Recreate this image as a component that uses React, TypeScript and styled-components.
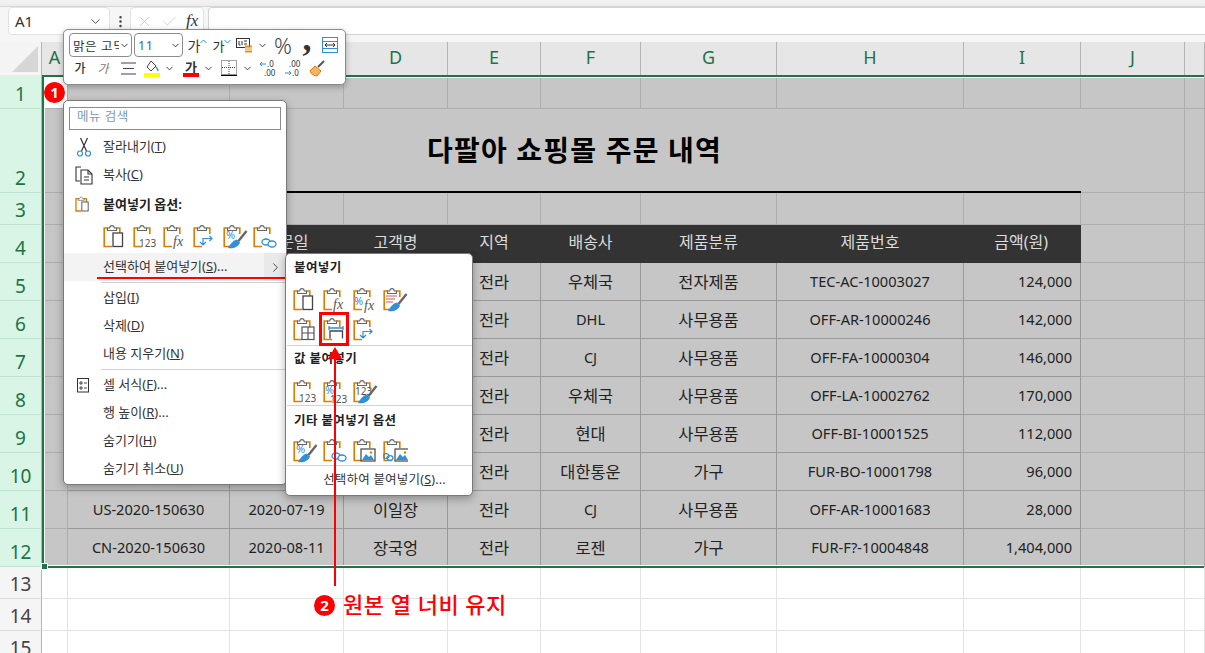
import React from "react";
import styled, { createGlobalStyle } from "styled-components";
import { Check, ChevronDown, ChevronRight, EllipsisVertical, X } from "lucide-react";

const GlobalStyle = createGlobalStyle`
  html, body { margin: 0; padding: 0; background: #fff; }
  body { font-family: "Noto Sans", "Noto Sans CJK KR", sans-serif; }
`;

const COLS = "42px 26px 162px 114px 104px 93px 100px 136px 187px 117px 104px 20px";
const LETTERS = ["A", "B", "C", "D", "E", "F", "G", "H", "I", "J", ""];
const ORANGE = "#e07b00";
const BLUE = "#2f8fd8";
const GRAY = "#555";

type RowData = [string, string, string, string, string, string, string, string];

const ORDERS: RowData[] = [
  ["", "", "", "전라", "우체국", "전자제품", "TEC-AC-10003027", "124,000"],
  ["", "", "", "전라", "DHL", "사무용품", "OFF-AR-10000246", "142,000"],
  ["", "", "", "전라", "CJ", "사무용품", "OFF-FA-10000304", "146,000"],
  ["", "", "", "전라", "우체국", "사무용품", "OFF-LA-10002762", "170,000"],
  ["", "", "", "전라", "현대", "사무용품", "OFF-BI-10001525", "112,000"],
  ["", "", "", "전라", "대한통운", "가구", "FUR-BO-10001798", "96,000"],
  ["US-2020-150630", "2020-07-19", "이일장", "전라", "CJ", "사무용품", "OFF-AR-10001683", "28,000"],
  ["CN-2020-150630", "2020-08-11", "장국엉", "전라", "로젠", "가구", "FUR-F?-10004848", "1,404,000"],
];
const HEADS = ["주문번호", "주문일", "고객명", "지역", "배송사", "제품분류", "제품번호", "금액(원)"];

/* ---------- sheet ---------- */

const Page = styled.div`
  position: relative;
  width: 1205px;
  height: 653px;
  overflow: hidden;
  background: #fff;
  color: #222;
`;

const TopStrip = styled.div`
  height: 7px;
  background: linear-gradient(#f3f3f3, #ebebeb);
`;

const FormulaBar = styled.div`
  display: flex;
  height: 28px;
  padding-bottom: 7px;
  background: #f6f6f6;
  border-top: 1px solid #d6d6d6;
  margin-top: -1px;
`;

const NameBox = styled.div`
  box-sizing: border-box;
  display: flex;
  align-items: center;
  justify-content: space-between;
  width: 102px;
  margin-left: 8px;
  padding: 0 6px 0 6px;
  background: #fff;
  border: 1px solid #e2e2e2;
  border-radius: 4px;
  font-size: 15px;
  color: #333;
`;

const DotsSlot = styled.div`
  display: flex;
  align-items: center;
  justify-content: center;
  width: 20px;
  color: #444;
`;

const FormulaButtons = styled.div`
  box-sizing: border-box;
  display: flex;
  align-items: center;
  gap: 8px;
  width: 74px;
  padding-left: 5px;
  background: #fff;
  border: 1px solid #e2e2e2;
  border-radius: 4px;
  color: #c9c9c9;
`;

const FxMark = styled.span`
  font-family: "Liberation Serif", serif;
  font-style: italic;
  font-size: 17px;
  color: #333;
`;

const FormulaInput = styled.div`
  flex: 1;
  margin-left: 4px;
  background: #fff;
  border: 1px solid #d4d4d4;
  border-right: none;
  border-radius: 4px 0 0 4px;
`;

const ColumnBar = styled.div`
  display: grid;
  grid-template-columns: ${COLS};
  height: 33px;
  background: #e6e6e6;
`;

const Corner = styled.div`
  background: #f4f4f4;
  border-right: 1px solid #b5b5b5;
  position: relative;
  &::after {
    content: "";
    position: absolute;
    right: 3px;
    bottom: 3px;
    width: 26px;
    height: 26px;
    background: #d6d6d6;
    clip-path: polygon(100% 0, 100% 100%, 0 100%);
  }
`;

const ColumnLetter = styled.div`
  display: flex;
  align-items: center;
  justify-content: center;
  padding-bottom: 4px;
  border-right: 1px solid #b5b5b5;
  font-size: 18px;
  color: #217346;
`;

const Body = styled.div`
  position: relative;
`;

const SheetRow = styled.div<{ $h: number }>`
  display: grid;
  grid-template-columns: ${COLS};
  height: ${(p) => p.$h}px;
`;

const RowLabel = styled.div<{ $on: boolean }>`
  display: flex;
  align-items: flex-end;
  justify-content: center;
  padding-bottom: 1px;
  box-sizing: border-box;
  font-size: 19px;
  line-height: 26px;
  background: ${(p) => (p.$on ? "#d8f5e6" : "#f5f5f5")};
  color: ${(p) => (p.$on ? "#217346" : "#444")};
  border-right: 1px solid #b5b5b5;
  border-bottom: 1px solid ${(p) => (p.$on ? "#bfe3d0" : "#dedede")};
`;

type Tone = "sel" | "table" | "head" | "plain";

const LINE: Record<Tone, string> = { sel: "#aeaeae", table: "#999", head: "#333", plain: "#e2e2e2" };

const Cell = styled.div<{ $tone?: Tone; $right?: number; $latin?: boolean }>`
  display: flex;
  align-items: center;
  justify-content: ${(p) => (p.$right ? "flex-end" : "center")};
  box-sizing: border-box;
  padding-right: ${(p) => p.$right ?? 0}px;
  padding-bottom: ${(p) => (p.$tone === "head" ? 5 : 2)}px;
  white-space: nowrap;
  font-size: ${(p) => (p.$latin ? "14.6px" : p.$tone === "head" ? "16px" : "16.4px")};
  color: ${(p) => (p.$tone === "head" ? "#dcdcdc" : "#222")};
  background: ${(p) => (p.$tone === "plain" ? "#fff" : p.$tone === "head" ? "#333" : "#c6c6c6")};
  border-right: 1px solid ${(p) => LINE[p.$tone ?? "sel"]};
  border-bottom: 1px solid ${(p) => LINE[p.$tone ?? "sel"]};
`;

const ActiveCell = styled.div`
  background: #fff;
  border-right: 1px solid #aeaeae;
  border-bottom: 1px solid #aeaeae;
`;

const TitleCell = styled.div`
  grid-column: span 8;
  display: flex;
  align-items: center;
  justify-content: center;
  box-sizing: border-box;
  padding-bottom: 2px;
  background: #c6c6c6;
  border-bottom: 2px solid #000;
  font-size: 28px;
  font-weight: 700;
  letter-spacing: 1.2px;
  color: #000;
`;

const SelectionFrame = styled.div`
  position: absolute;
  left: 42px;
  top: 0;
  box-sizing: border-box;
  width: 1162px;
  height: 493px;
  border: 2px solid #217346;
  border-right: none;
  box-shadow: inset 1px 1px 0 #fff, inset 0 -1px 0 #fff;
  pointer-events: none;
  &::after {
    content: "";
    position: absolute;
    left: -2px;
    bottom: -3px;
    width: 5px;
    height: 5px;
    background: #217346;
    outline: 1px solid #fff;
  }
`;

/* ---------- mini toolbar ---------- */

const MiniToolbar = styled.div`
  position: absolute;
  left: 63px;
  top: 29px;
  box-sizing: border-box;
  width: 283px;
  height: 56px;
  padding: 3px 5px;
  background: #fff;
  border: 1px solid #8c8c8c;
  border-radius: 5px;
  box-shadow: 0 2px 6px rgba(0, 0, 0, 0.28);
`;

const ToolRow = styled.div<{ $h: number }>`
  display: flex;
  align-items: center;
  height: ${(p) => p.$h}px;
  & + & {
    margin-top: 1px;
  }
`;

const ComboBox = styled.div<{ $w: number }>`
  box-sizing: border-box;
  display: flex;
  align-items: center;
  justify-content: space-between;
  flex: none;
  width: ${(p) => p.$w}px;
  height: 24px;
  margin-right: 2px;
  padding: 0 1px 0 3px;
  border: 1px solid #8c8c8c;
  border-radius: 4px;
  font-size: 12.5px;
  letter-spacing: 0.6px;
  color: #333;
  overflow: hidden;
  white-space: nowrap;
`;

const ComboText = styled.span<{ $blue?: boolean }>`
  overflow: hidden;
  color: ${(p) => (p.$blue ? "#1f6fb5" : "#333")};
`;

const ToolSlot = styled.div<{ $w: number; $ml?: number }>`
  position: relative;
  display: flex;
  align-items: center;
  justify-content: center;
  flex: none;
  width: ${(p) => p.$w}px;
  height: 20px;
  margin-left: ${(p) => p.$ml ?? 0}px;
  color: #444;
`;

const TinyChevron = styled(ChevronDown).attrs({ size: 11 })`
  flex: none;
  color: #333;
`;

const HanGlyph = styled.span<{ $weight?: number; $italic?: boolean; $size?: number; $lift?: number }>`
  font-size: ${(p) => p.$size ?? 12}px;
  font-weight: ${(p) => p.$weight ?? 400};
  font-style: ${(p) => (p.$italic ? "italic" : "normal")};
  margin-top: ${(p) => -(p.$lift ?? 0)}px;
  color: ${(p) => (p.$italic ? "#777" : "#333")};
`;

const Percent = styled.span`
  font-size: 22px;
  font-weight: 300;
  color: #444;
`;

const Comma = styled.span`
  font-family: "Liberation Serif", serif;
  font-weight: 700;
  font-size: 36px;
  line-height: 20px;
  margin-top: -14px;
  color: #333;
`;

/* ---------- menus ---------- */

const Menu = styled.div`
  position: absolute;
  box-sizing: border-box;
  background: #fff;
  border: 1px solid #7a7a7a;
  border-radius: 5px;
  box-shadow: 0 3px 9px rgba(0, 0, 0, 0.3);
  font-size: 13px;
  color: #333;
`;

const ContextMenu = styled(Menu)`
  left: 63px;
  top: 100px;
  width: 224px;
  height: 385px;
  padding-top: 6px;
`;

const PasteMenu = styled(Menu)`
  left: 285px;
  top: 253px;
  width: 188px;
  height: 243px;
  padding-top: 4px;
`;

const SearchBox = styled.div`
  box-sizing: border-box;
  height: 23px;
  margin: 0 5px 3px;
  padding-left: 7px;
  border: 1px solid #8a8a8a;
  font-size: 12.5px;
  line-height: 17px;
  color: #7d9cb0;
  letter-spacing: 0.5px;
`;

const MenuItem = styled.div<{ $hover?: boolean; $h?: number; $top?: number }>`
  position: relative;
  display: flex;
  align-items: center;
  height: ${(p) => p.$h ?? 28}px;
  margin-top: ${(p) => p.$top ?? 0}px;
  background: ${(p) => (p.$hover ? "#f3f3f3" : "transparent")};
`;

const ItemIcon = styled.div`
  display: flex;
  align-items: center;
  justify-content: center;
  width: 37px;
  padding-left: 2px;
  box-sizing: border-box;
  flex: none;
`;

const ItemLabel = styled.span<{ $bold?: boolean }>`
  margin: -3px 0 0 2px;
  font-weight: ${(p) => (p.$bold ? 700 : 400)};
  color: ${(p) => (p.$bold ? "#222" : "#333")};
  white-space: nowrap;
`;

const IconRow = styled.div<{ $left: number; $h: number; $top?: number }>`
  display: flex;
  align-items: flex-start;
  gap: 5px;
  padding-left: ${(p) => p.$left}px;
  height: ${(p) => p.$h}px;
  margin-top: ${(p) => p.$top ?? 0}px;
`;

const SubmenuArrow = styled.div`
  position: absolute;
  right: 0;
  top: 0;
  bottom: 0;
  width: 22px;
  display: flex;
  align-items: center;
  justify-content: center;
  background: #e9e9e9;
  color: #333;
`;

const RedUnderline = styled.div`
  position: absolute;
  left: 33px;
  right: 0;
  bottom: 2px;
  height: 2px;
  background: #f00;
`;

const MenuRule = styled.div<{ $inset: number; $gap?: number }>`
  height: 1px;
  margin: ${(p) => p.$gap ?? 1}px 0 ${(p) => p.$gap ?? 1}px ${(p) => p.$inset}px;
  background: #d2d2d2;
`;

const GroupTitle = styled.div<{ $top?: number }>`
  height: 19px;
  line-height: 19px;
  margin-top: ${(p) => p.$top ?? 0}px;
  padding-left: 8px;
  font-size: 12.5px;
  font-weight: 700;
  letter-spacing: 0.4px;
  color: #222;
`;

const CenterItem = styled.div`
  height: 28px;
  line-height: 27px;
  text-align: center;
  font-size: 12.5px;
  letter-spacing: 0.2px;
  padding-left: 11px;
`;

const PickedFrame = styled.div`
  box-sizing: border-box;
  flex: none;
  width: 30px;
  height: 34px;
  margin: -5px -1px 0 -4px;
  padding: 2px 0 0 1px;
  border: 3px solid #f00;
`;

/* ---------- annotations ---------- */

const Badge = styled.div<{ $x: number; $y: number }>`
  position: absolute;
  left: ${(p) => p.$x}px;
  top: ${(p) => p.$y}px;
  display: flex;
  align-items: center;
  justify-content: center;
  width: 21px;
  height: 21px;
  border-radius: 50%;
  background: #f00;
  color: #fff;
  font-size: 15px;
  font-weight: 700;
  line-height: 1;
`;

const CalloutText = styled.div`
  position: absolute;
  left: 343px;
  top: 588px;
  font-size: 22px;
  font-weight: 500;
  letter-spacing: 0.5px;
  line-height: 32px;
  color: #f00;
  white-space: nowrap;
`;

const ArrowOverlay = styled.svg`
  position: absolute;
  left: 325px;
  top: 345px;
`;

/* ---------- icons ---------- */

type Overlay =
  | "page" | "values" | "fx" | "pctFx" | "keep" | "grid" | "width" | "swap"
  | "pctValues" | "valuesBrush" | "pctBrush" | "link" | "picture" | "linkPicture";

const Brush = () => (
  <g>
    <path d="M14 15.5c-4 1-6.500 4-9 8.500 5 1 10.500-1 12-5.500z" fill={BLUE} />
    <path d="M15.500 17 23.500 7" stroke="#666" strokeWidth="2.4" fill="none" />
  </g>
);

const LinkMark = () => (
  <g fill="#fff" stroke={BLUE} strokeWidth="1.3">
    <ellipse cx="13" cy="18" rx="4" ry="3" />
    <ellipse cx="19" cy="20" rx="4" ry="3" />
  </g>
);

const Mountains = ({ x = 0 }: { x?: number }) => (
  <g transform={`translate(${x} 0)`}>
    <rect x="8" y="11" width="14" height="12" fill="#fff" stroke="#444" strokeWidth="1.2" />
    <path d="M9 22l4-6 3 3 2-2 3 5z" fill={BLUE} />
    <circle cx="18" cy="14.5" r="1.2" fill={ORANGE} />
  </g>
);

const OVERLAYS: Record<Overlay, React.ReactNode> = {
  page: <rect x="10" y="9" width="9.5" height="13.5" fill="#fff" stroke="#444" strokeWidth="1.3" />,
  values: <text x="6" y="23" fontSize="10" fill={GRAY} fontFamily="Noto Sans">123</text>,
  fx: <text x="10" y="22" fontSize="14" fontStyle="italic" fill={GRAY} fontFamily="Liberation Serif">fx</text>,
  pctFx: (
    <g>
      <text x="1" y="18" fontSize="11" fill={BLUE} fontFamily="Noto Sans">%</text>
      <text x="11" y="23" fontSize="14" fontStyle="italic" fill={GRAY} fontFamily="Liberation Serif">fx</text>
    </g>
  ),
  keep: (
    <g>
      <path d="M3 9h11M3 12h9M3 15h7" stroke="#d9534f" strokeWidth="1" />
      <Brush />
    </g>
  ),
  grid: (
    <g fill="#fff" stroke={GRAY} strokeWidth="1.2">
      <rect x="9" y="10" width="12" height="12.5" />
      <path d="M15 10v12.5M9 16h12" fill="none" />
    </g>
  ),
  width: (
    <g fill="none" strokeWidth="1.3">
      <path d="M6 11h14M6 9v4M20 9v4" stroke={BLUE} />
      <path d="M7 21.5V14h12.5v7.5" stroke="#444" />
    </g>
  ),
  swap: (
    <g fill="none" stroke={BLUE} strokeWidth="1.2">
      <path d="M10 20v-5.500h9M16.500 12l2.500 2.500-2.500 2.500M7 18l3 3 3-3" />
    </g>
  ),
  pctValues: (
    <g>
      <text x="2" y="15" fontSize="11" fill={BLUE} fontFamily="Noto Sans">%</text>
      <text x="7" y="24" fontSize="10" fill={GRAY} fontFamily="Noto Sans">123</text>
    </g>
  ),
  valuesBrush: (
    <g>
      <text x="2" y="16" fontSize="10" fill={GRAY} fontFamily="Noto Sans">123</text>
      <Brush />
    </g>
  ),
  pctBrush: (
    <g>
      <text x="3" y="15" fontSize="11" fill={BLUE} fontFamily="Noto Sans">%</text>
      <Brush />
    </g>
  ),
  link: <LinkMark />,
  picture: <Mountains />,
  linkPicture: (
    <g>
      <ellipse cx="3" cy="18" rx="3" ry="2.4" fill="none" stroke={BLUE} strokeWidth="1.2" />
      <ellipse cx="7" cy="20" rx="3" ry="2.4" fill="none" stroke={BLUE} strokeWidth="1.2" />
      <Mountains x={4} />
    </g>
  ),
};

const ClipSvg = styled.svg`
  flex: none;
`;

const PasteIcon = ({ kind, small }: { kind: Overlay; small?: boolean }) => (
  <ClipSvg width={small ? 17 : 25} height={small ? 18 : 27} viewBox="0 0 25 27">
    <path d="M5 4H1.2v18.5H9M13 4h3.8v6" fill="none" stroke={ORANGE} strokeWidth={small ? 2 : 1.6} />
    <path d="M4.5 6.5V4h2.2C7 .8 11 .8 11.3 4h2.2v2.5z" fill="#fff" stroke="#666" strokeWidth="1.1" />
    {OVERLAYS[kind]}
  </ClipSvg>
);

const Scissors = () => (
  <svg width="16" height="20" viewBox="0 0 16 20" fill="none">
    <path d="M4.5 1l6 13M11.5 1l-6 13" stroke="#333" strokeWidth="1.2" />
    <circle cx="4" cy="16.5" r="2.5" stroke={BLUE} strokeWidth="1.2" />
    <circle cx="12" cy="16.5" r="2.5" stroke={BLUE} strokeWidth="1.2" />
  </svg>
);

const CopyPages = () => (
  <svg width="20" height="20" viewBox="0 0 20 20" fill="none" stroke="#333" strokeWidth="1.1">
    <path d="M7 2H2v14h4" />
    <path d="M7 5h7l4 4v10H7z" fill="#fff" />
    <path d="M14 5v4h4M10 12h5M10 15h5" />
  </svg>
);

const CellFormat = () => (
  <svg width="13" height="15" viewBox="0 0 13 15" fill="none" stroke="#333">
    <rect x="0.5" y="0.5" width="11" height="13.5" />
    <path d="M3 4h2v2H3zM3 9h2v2H3zM7 5h3M7 10h3" strokeWidth="0.9" />
  </svg>
);

const CaretSvg = styled.svg`
  margin-top: -8px;
`;

const GrowCaret = ({ down }: { down?: boolean }) => (
  <CaretSvg width="7" height="5" viewBox="0 0 7 5" fill="none" stroke={BLUE}>
    <path d={down ? "M.5 1l3 3 3-3" : "M.5 4l3-3 3 3"} />
  </CaretSvg>
);

const CellStyles = () => (
  <svg width="17" height="16" viewBox="0 0 17 16" fill="none">
    <rect x="0.5" y="1.5" width="13" height="9" stroke="#333" />
    <path d="M3 4v4h1.5M6 4v4M8 4h3M8 7h3" stroke="#333" />
    <path d="M9 8.5h7v7H9z" fill={ORANGE} opacity="0.85" />
    <path d="M9 11h7M9 13h7" stroke="#fff" />
  </svg>
);

const WrapMerge = () => (
  <svg width="16" height="16" viewBox="0 0 16 16" fill="none">
    <rect x="0.5" y="0.5" width="15" height="15" stroke={BLUE} />
    <path d="M1 4.5h14M1 11.5h14" stroke={BLUE} />
    <path d="M3 8h10M3 8l2-2M3 8l2 2M13 8l-2-2M13 8l-2 2" stroke="#333" />
  </svg>
);

const AlignLines = () => (
  <svg width="15" height="13" viewBox="0 0 15 13" stroke="#444" strokeWidth="1.1">
    <path d="M0 1h15M2 6.5h11M0 12h15" />
  </svg>
);

const FillBucket = () => (
  <svg width="16" height="17" viewBox="0 0 16 17" fill="none">
    <path d="M7 1l5 5-5 5-4-4z" stroke="#444" />
    <path d="M12 7c1 1 2 2 2 4" stroke={BLUE} strokeWidth="1.4" />
    <rect x="0" y="13" width="16" height="4" fill="#ff0" />
  </svg>
);

const Underbar = styled.span<{ $c: string }>`
  position: absolute;
  left: 50%;
  bottom: 1px;
  width: 16px;
  height: 4px;
  margin-left: -8px;
  background: ${(p) => p.$c};
`;

const Borders = () => (
  <svg width="16" height="16" viewBox="0 0 16 16" fill="none" stroke="#444">
    <path d="M.5.5h15v14H.5z" strokeDasharray="1 1" />
    <path d="M8 1v13M1 7.5h14" strokeDasharray="1 1" />
    <path d="M0 15.5h16" strokeWidth="1.2" stroke="#000" />
  </svg>
);

const DecimalIcon = ({ more }: { more?: boolean }) => (
  <svg width="18" height="17" viewBox="0 0 18 17" fontFamily="Noto Sans" fontSize="8" fill="#333">
    {more ? (
      <>
        <path d="M7 4H1M1 4l2-2M1 4l2 2" stroke={BLUE} fill="none" />
        <text x="8" y="7">.0</text>
        <text x="5" y="16">.00</text>
      </>
    ) : (
      <>
        <text x="5" y="7">.00</text>
        <path d="M1 13h6M7 13l-2-2M7 13l-2 2" stroke={BLUE} fill="none" />
        <text x="8" y="16">.0</text>
      </>
    )}
  </svg>
);

const FormatBrush = () => (
  <svg width="17" height="17" viewBox="0 0 17 17" fill="none">
    <path d="M1 11l5-5 6 5-4 5c-3 0-6-2-7-5z" fill="#f5b46a" stroke={ORANGE} />
    <path d="M9 7l6-6" stroke="#555" strokeWidth="2" />
  </svg>
);

/* ---------- page ---------- */

const Underlined = ({ name, keyChar, tail = "" }: { name: string; keyChar: string; tail?: string }) => (
  <ItemLabel>
    {name}(<u>{keyChar}</u>){tail}
  </ItemLabel>
);

function Sheet() {
  return (
    <Body>
      <SheetRow $h={34}>
        <RowLabel $on>1</RowLabel>
        <ActiveCell />
        {LETTERS.slice(1).map((l) => (
          <Cell key={l} $tone="sel" />
        ))}
      </SheetRow>
      <SheetRow $h={84}>
        <RowLabel $on>2</RowLabel>
        <Cell $tone="sel" />
        <TitleCell>다팔아 쇼핑몰 주문 내역</TitleCell>
        <Cell $tone="sel" />
        <Cell $tone="sel" />
      </SheetRow>
      <SheetRow $h={32}>
        <RowLabel $on>3</RowLabel>
        {LETTERS.map((l) => (
          <Cell key={l} $tone="sel" />
        ))}
      </SheetRow>
      <SheetRow $h={38}>
        <RowLabel $on>4</RowLabel>
        <Cell $tone="sel" />
        {HEADS.map((h, i) => (
          <Cell key={h} $tone="head" $right={i === 7 ? 32 : undefined}>
            {h}
          </Cell>
        ))}
        <Cell $tone="sel" />
        <Cell $tone="sel" />
      </SheetRow>
      {ORDERS.map((row, r) => (
        <SheetRow key={r} $h={38}>
          <RowLabel $on>{r + 5}</RowLabel>
          <Cell $tone="sel" />
          {row.map((v, i) => (
            <Cell key={i} $tone="table" $right={i === 7 ? 8 : undefined} $latin={i < 2 || i >= 6 || /^[A-Z]+$/.test(v)}>
              {v}
            </Cell>
          ))}
          <Cell $tone="sel" />
          <Cell $tone="sel" />
        </SheetRow>
      ))}
      {[13, 14, 15].map((n) => (
        <SheetRow key={n} $h={32}>
          <RowLabel $on={false}>{n}</RowLabel>
          {LETTERS.map((l) => (
            <Cell key={l} $tone="plain" />
          ))}
        </SheetRow>
      ))}
      <SelectionFrame />
    </Body>
  );
}

export default function App() {
  return (
    <Page>
      <GlobalStyle />
      <TopStrip />
      <FormulaBar>
        <NameBox>
          A1
          <ChevronDown size={15} strokeWidth={1.5} color="#444" />
        </NameBox>
        <DotsSlot>
          <EllipsisVertical size={15} strokeWidth={2} />
        </DotsSlot>
        <FormulaButtons>
          <X size={17} strokeWidth={1.2} />
          <Check size={17} strokeWidth={1.2} />
          <FxMark>fx</FxMark>
        </FormulaButtons>
        <FormulaInput />
      </FormulaBar>
      <ColumnBar>
        <Corner />
        {LETTERS.map((l, i) => (
          <ColumnLetter key={i}>{l}</ColumnLetter>
        ))}
      </ColumnBar>
      <Sheet />

      <Badge $x={44} $y={82}>1</Badge>

      <MiniToolbar>
        <ToolRow $h={24}>
          <ComboBox $w={63}>
            <ComboText>맑은 고딕</ComboText>
            <TinyChevron />
          </ComboBox>
          <ComboBox $w={49}>
            <ComboText $blue>11</ComboText>
            <TinyChevron />
          </ComboBox>
          <ToolSlot $w={25}><HanGlyph $size={14}>가</HanGlyph><GrowCaret /></ToolSlot>
          <ToolSlot $w={24}><HanGlyph $size={13}>가</HanGlyph><GrowCaret down /></ToolSlot>
          <ToolSlot $w={20}><CellStyles /></ToolSlot>
          <ToolSlot $w={16}><TinyChevron /></ToolSlot>
          <ToolSlot $w={26}><Percent>%</Percent></ToolSlot>
          <ToolSlot $w={22}><Comma>,</Comma></ToolSlot>
          <ToolSlot $w={24}><WrapMerge /></ToolSlot>
        </ToolRow>
        <ToolRow $h={20}>
          <ToolSlot $w={22}><HanGlyph $weight={500}>가</HanGlyph></ToolSlot>
          <ToolSlot $w={24}><HanGlyph $italic>가</HanGlyph></ToolSlot>
          <ToolSlot $w={26}><AlignLines /></ToolSlot>
          <ToolSlot $w={22}><FillBucket /></ToolSlot>
          <ToolSlot $w={13}><TinyChevron /></ToolSlot>
          <ToolSlot $w={22} $ml={4}>
            <HanGlyph $weight={700} $size={13} $lift={4}>가</HanGlyph>
            <Underbar $c="#f00" />
          </ToolSlot>
          <ToolSlot $w={12}><TinyChevron /></ToolSlot>
          <ToolSlot $w={20} $ml={5}><Borders /></ToolSlot>
          <ToolSlot $w={12} $ml={2}><TinyChevron /></ToolSlot>
          <ToolSlot $w={20} $ml={5}><DecimalIcon more /></ToolSlot>
          <ToolSlot $w={20} $ml={5}><DecimalIcon /></ToolSlot>
          <ToolSlot $w={20} $ml={4}><FormatBrush /></ToolSlot>
        </ToolRow>
      </MiniToolbar>

      <ContextMenu>
        <SearchBox>메뉴 검색</SearchBox>
        <MenuItem>
          <ItemIcon><Scissors /></ItemIcon>
          <Underlined name="잘라내기" keyChar="T" />
        </MenuItem>
        <MenuItem>
          <ItemIcon><CopyPages /></ItemIcon>
          <Underlined name="복사" keyChar="C" />
        </MenuItem>
        <MenuItem $h={30} $top={1}>
          <ItemIcon><PasteIcon kind="page" small /></ItemIcon>
          <ItemLabel $bold>붙여넣기 옵션:</ItemLabel>
        </MenuItem>
        <IconRow $left={39} $h={29} $top={4}>
          <PasteIcon kind="page" />
          <PasteIcon kind="values" />
          <PasteIcon kind="fx" />
          <PasteIcon kind="swap" />
          <PasteIcon kind="pctBrush" />
          <PasteIcon kind="link" />
        </IconRow>
        <MenuItem $hover>
          <ItemIcon />
          <Underlined name="선택하여 붙여넣기" keyChar="S" tail="..." />
          <SubmenuArrow><ChevronRight size={15} strokeWidth={1.4} /></SubmenuArrow>
          <RedUnderline />
        </MenuItem>
        <MenuRule $inset={37} />
        <MenuItem>
          <ItemIcon />
          <Underlined name="삽입" keyChar="I" />
        </MenuItem>
        <MenuItem>
          <ItemIcon />
          <Underlined name="삭제" keyChar="D" />
        </MenuItem>
        <MenuItem>
          <ItemIcon />
          <Underlined name="내용 지우기" keyChar="N" />
        </MenuItem>
        <MenuRule $inset={37} />
        <MenuItem>
          <ItemIcon><CellFormat /></ItemIcon>
          <Underlined name="셀 서식" keyChar="F" tail="..." />
        </MenuItem>
        <MenuItem>
          <ItemIcon />
          <Underlined name="행 높이" keyChar="R" tail="..." />
        </MenuItem>
        <MenuItem>
          <ItemIcon />
          <Underlined name="숨기기" keyChar="H" />
        </MenuItem>
        <MenuItem>
          <ItemIcon />
          <Underlined name="숨기기 취소" keyChar="U" />
        </MenuItem>
      </ContextMenu>

      <PasteMenu>
        <GroupTitle>붙여넣기</GroupTitle>
        <IconRow $left={7} $h={30} $top={10}>
          <PasteIcon kind="page" />
          <PasteIcon kind="fx" />
          <PasteIcon kind="pctFx" />
          <PasteIcon kind="keep" />
        </IconRow>
        <IconRow $left={7} $h={28}>
          <PasteIcon kind="grid" />
          <PickedFrame><PasteIcon kind="width" /></PickedFrame>
          <PasteIcon kind="swap" />
        </IconRow>
        <MenuRule $inset={1} $gap={0} />
        <GroupTitle $top={3}>값 붙여넣기</GroupTitle>
        <IconRow $left={7} $h={26} $top={11}>
          <PasteIcon kind="values" />
          <PasteIcon kind="pctValues" />
          <PasteIcon kind="valuesBrush" />
        </IconRow>
        <MenuRule $inset={1} $gap={0} />
        <GroupTitle $top={5}>기타 붙여넣기 옵션</GroupTitle>
        <IconRow $left={7} $h={27} $top={8}>
          <PasteIcon kind="pctBrush" />
          <PasteIcon kind="link" />
          <PasteIcon kind="picture" />
          <PasteIcon kind="linkPicture" />
        </IconRow>
        <MenuRule $inset={1} $gap={0} />
        <CenterItem>
          선택하여 붙여넣기(<u>S</u>)...
        </CenterItem>
      </PasteMenu>

      <ArrowOverlay width="20" height="242" viewBox="0 0 20 242">
        <path d="M10 2 L17 14 H11 V241 H9 V14 H3 Z" fill="#f00" />
      </ArrowOverlay>
      <Badge $x={314} $y={595}>2</Badge>
      <CalloutText>원본 열 너비 유지</CalloutText>
    </Page>
  );
}
